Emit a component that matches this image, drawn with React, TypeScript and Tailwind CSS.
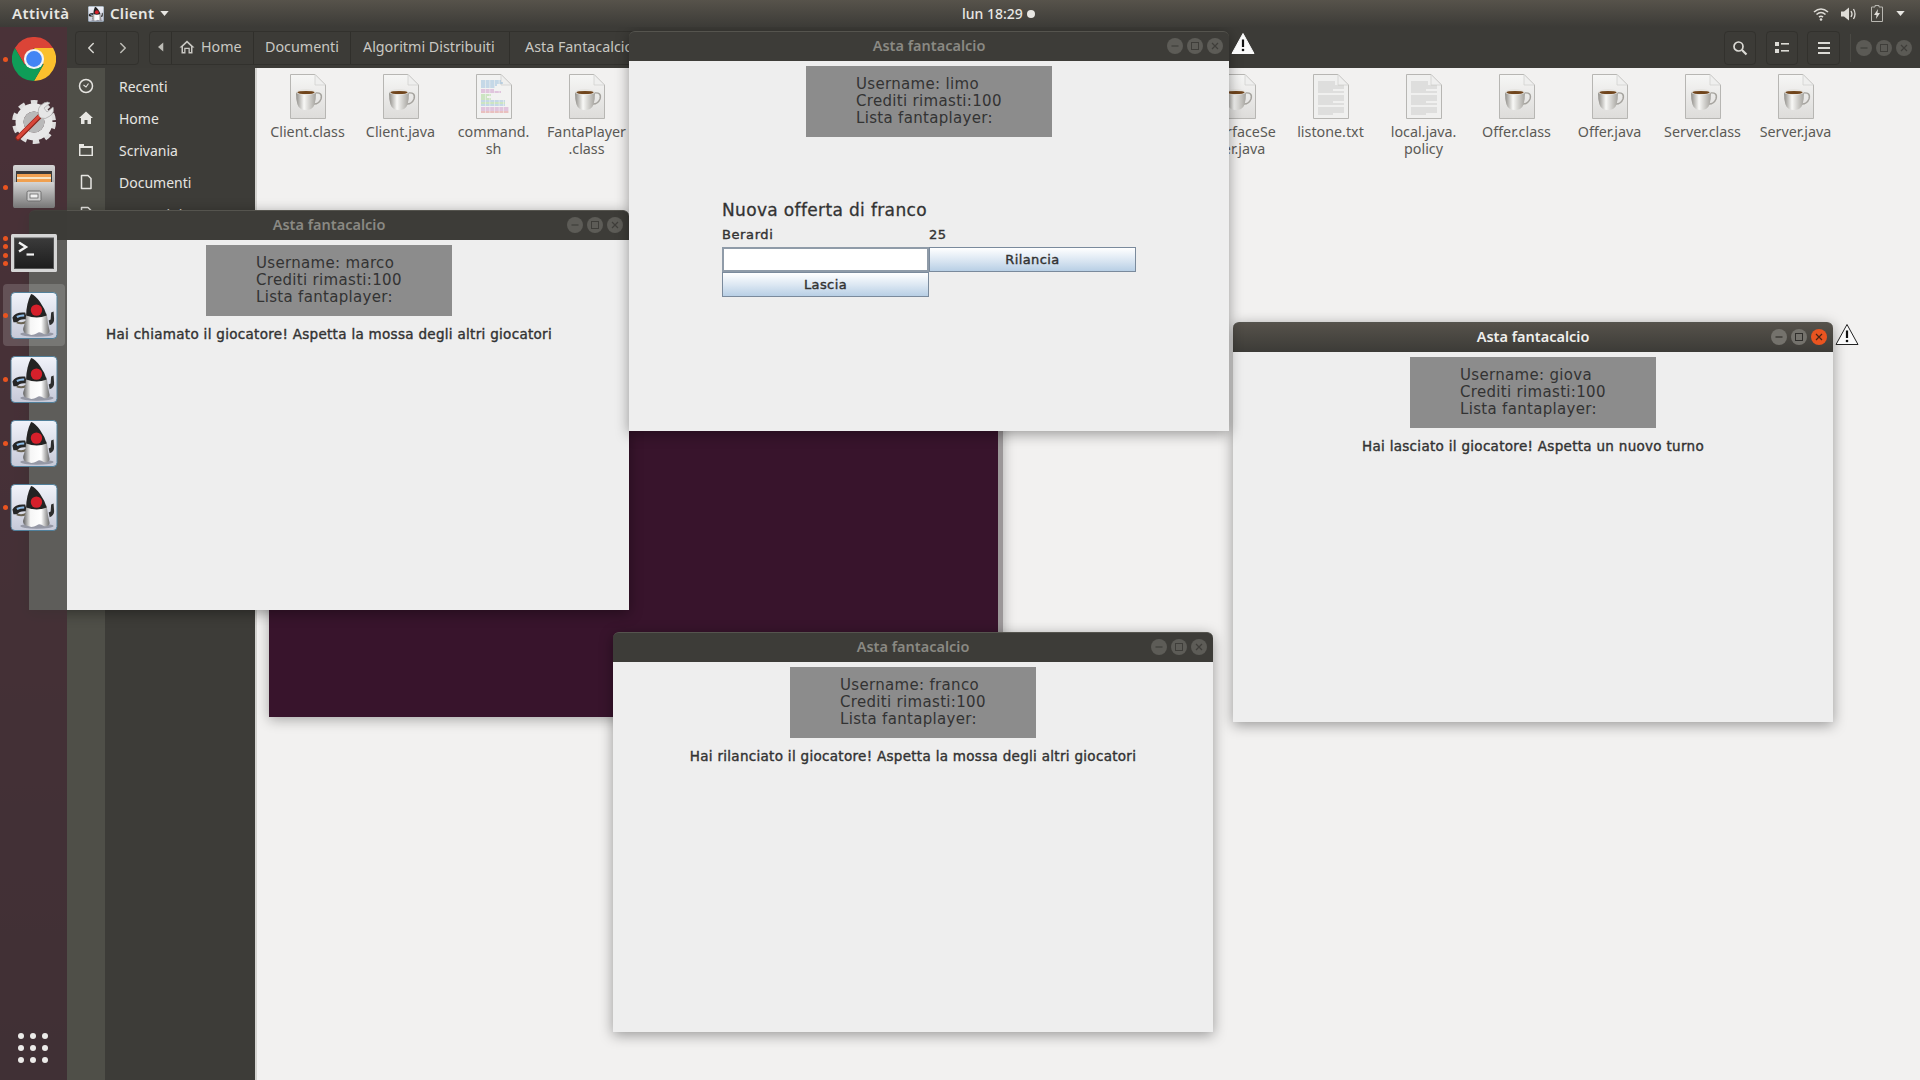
import React from "react";
import { ChevronLeft, ChevronRight } from "lucide-react";

const ui = "font-['Noto_Sans',sans-serif]";
const jf = "font-['DejaVu_Sans',sans-serif]";

function Duke({ className = "w-[48px] h-[47px]" }: { className?: string }) {
  return (
    <svg viewBox="0 0 48 48" className={className}>
      <defs>
        <linearGradient id="dbg" x1="0" y1="0" x2="0" y2="1">
          <stop offset="0" stopColor="#f1f3fa" />
          <stop offset="1" stopColor="#c6c9d8" />
        </linearGradient>
        <linearGradient id="dbody" x1="0" y1="0" x2="1" y2="0">
          <stop offset="0" stopColor="#5f5f5f" />
          <stop offset="0.28" stopColor="#f6f6f6" />
          <stop offset="0.68" stopColor="#ffffff" />
          <stop offset="1" stopColor="#6d6d6d" />
        </linearGradient>
      </defs>
      <rect x="0.5" y="0.5" width="47" height="47" rx="4" fill="url(#dbg)" stroke="#4f7f9b" />
      <ellipse cx="27" cy="43" rx="17" ry="2.6" fill="#7f818e" opacity="0.7" />
      <path d="M2 26 Q5 20 15 21 L17 28 Q9 27 7 31 L3 31Z" fill="#262626" />
      <path d="M6 24.5 Q10 22.5 14 23 L14 25 Q10 25 7 26.5Z" fill="#8fbde8" />
      <path d="M7 30 Q12 32 16 29 L16 32 Q11 34 6 32Z" fill="#6b6453" />
      <path d="M16 22 L37 22 Q38 32 40 40 Q39 44 34 43 Q30 40 27 42 Q22 45 18 43 Q12 42 13 37 Q16 30 16 22Z" fill="url(#dbody)" />
      <path d="M21 2 Q25 3 30 10 Q35 17 37 24 Q27 28 16 24 Q16 12 21 2Z" fill="#232323" />
      <circle cx="26.5" cy="18.5" r="5.8" fill="#d6202b" />
      <path d="M39 29 L41 28 L41.5 21 L44 20 L44.5 27 Q45 32 40 34Z" fill="#2e2e2e" />
    </svg>
  );
}

function Chrome() {
  return (
    <svg viewBox="0 0 48 48" className="w-[44px] h-[44px]">
      <path d="M3.2 12A24 24 0 0 1 44.8 12H24L13.6 30Z" fill="#db4437" />
      <path d="M44.8 12A24 24 0 0 1 24 48L34.4 30L24 12Z" fill="#fbc02d" />
      <path d="M24 48A24 24 0 0 1 3.2 12L13.6 30H34.4Z" fill="#0f9d58" />
      <circle cx="24" cy="24" r="11" fill="#f3f3f3" />
      <circle cx="24" cy="24" r="8.6" fill="#4285f4" />
    </svg>
  );
}

function Tools() {
  return (
    <svg viewBox="0 0 44 44" className="w-[44px] h-[44px]">
      <circle cx="22" cy="22" r="19.5" fill="none" stroke="#dedede" strokeWidth="5" strokeDasharray="6.5 6.1" />
      <circle cx="22" cy="22" r="14.5" fill="none" stroke="#e8e8e8" strokeWidth="8" />
      <circle cx="22" cy="22" r="10.5" fill="#b9b9b9" />
      <path d="M6 38 L29 15" stroke="#8a241b" strokeWidth="5.2" strokeLinecap="round" />
      <path d="M6 37.5 L29 14.5" stroke="#d8473a" strokeWidth="3.2" strokeLinecap="round" />
      <path d="M27 16 Q24 7 32 3 Q36 1 38 3 L32 8 L35 12 L41 7 Q43 12 38 16 Q33 20 29 18Z" fill="#e6e6e6" stroke="#a5a5a5" strokeWidth="0.7" />
    </svg>
  );
}

function Cabinet() {
  return (
    <svg viewBox="0 0 42 43" className="w-[42px] h-[43px]">
      <defs>
        <linearGradient id="cab" x1="0" y1="0" x2="0" y2="1">
          <stop offset="0" stopColor="#d5d5d5" />
          <stop offset="1" stopColor="#777" />
        </linearGradient>
      </defs>
      <rect x="0" y="0" width="42" height="43" rx="2" fill="url(#cab)" />
      <rect x="3" y="6" width="36" height="11" fill="#3a3a3a" />
      <rect x="4" y="9" width="34" height="8" fill="#f0a050" />
      <rect x="4" y="12" width="34" height="2" fill="#f6e3c4" />
      <rect x="1" y="17" width="40" height="26" rx="1" fill="url(#cab)" />
      <rect x="14" y="26" width="14" height="10" rx="1.5" fill="#cfcfcf" stroke="#6e6e6e" />
      <rect x="17" y="29" width="8" height="4" fill="#f2f2f2" stroke="#555" strokeWidth="0.7" />
    </svg>
  );
}

function Terminal() {
  return (
    <svg viewBox="0 0 46 38" className="w-[46px] h-[38px]">
      <defs>
        <linearGradient id="term" x1="0" y1="0" x2="0" y2="1">
          <stop offset="0" stopColor="#3b3b3b" />
          <stop offset="1" stopColor="#1d1d1d" />
        </linearGradient>
      </defs>
      <rect x="0" y="0" width="46" height="38" rx="1.5" fill="#d6d6d6" />
      <rect x="3.5" y="4" width="39" height="30.5" fill="url(#term)" stroke="#555" />
      <path d="M8 8.5 L15 13 L8 17.5" fill="none" stroke="#f4f4f4" strokeWidth="2.4" />
      <path d="M15.5 20.5 H23" stroke="#f4f4f4" strokeWidth="2.2" />
    </svg>
  );
}

function CoffeePage() {
  return (
    <svg viewBox="0 0 36 45" className="w-[36px] h-[45px]">
      <defs>
        <linearGradient id="pg" x1="0" y1="0" x2="0" y2="1">
          <stop offset="0" stopColor="#f6f6f5" />
          <stop offset="1" stopColor="#dddcda" />
        </linearGradient>
        <linearGradient id="cup" x1="0" y1="0" x2="1" y2="0">
          <stop offset="0" stopColor="#8f8d88" />
          <stop offset="0.4" stopColor="#f8f8f6" />
          <stop offset="1" stopColor="#a5a39e" />
        </linearGradient>
      </defs>
      <path d="M0.5 0.5H25L35.5 11V44.5H0.5Z" fill="url(#pg)" stroke="#b7b6b3" />
      <path d="M25 0.5V11H35.5Z" fill="#efefee" stroke="#cfcecc" strokeWidth="0.7" />
      <path d="M25 19 Q33 18 31 25 Q29 30 24 30" fill="none" stroke="#a5a39e" strokeWidth="1.5" />
      <path d="M6 18 Q6 33 11 35 Q16 37 21 35 Q26 33 26 18Z" fill="url(#cup)" />
      <ellipse cx="16" cy="18" rx="10" ry="3" fill="#e6e5e2" />
      <ellipse cx="16" cy="18.5" rx="8.6" ry="1.6" fill="#70451c" />
    </svg>
  );
}

function TextPage() {
  const rows = [8, 10, 12, 14, 16, 18, 22, 24, 26, 28, 30, 34, 36, 38, 40];
  return (
    <svg viewBox="0 0 36 45" className="w-[36px] h-[45px]">
      <path d="M0.5 0.5H25L35.5 11V44.5H0.5Z" fill="#f0f0ef" stroke="#b7b6b3" />
      <path d="M25 0.5V11H35.5Z" fill="#efefee" stroke="#cfcecc" strokeWidth="0.7" />
      {rows.map((y, i) => (
        <path key={y} d={`M5 ${y}H${y < 12 ? 22 : i % 5 === 4 ? 20 : 31}`} stroke="#b5b5b3" strokeWidth="0.6" />
      ))}
    </svg>
  );
}

function ScriptPage() {
  const rows: [number, number, string][] = [
    [7, 20, "#5d9ad0"], [9, 22, "#5d9ad0"], [11, 16, "#5d9ad0"], [13, 14, "#5d9ad0"], [16, 13, "#b65bb0"], [18, 20, "#b65bb0"],
    [21, 10, "#72c456"], [23, 6, "#72c456"], [25, 10, "#72c456"], [27, 24, "#5d9ad0"], [29, 24, "#72c456"], [31, 24, "#5d9ad0"],
    [34, 28, "#b65bb0"], [36, 28, "#b65bb0"], [38, 28, "#d34c4c"],
  ];
  return (
    <svg viewBox="0 0 36 45" className="w-[36px] h-[45px]">
      <path d="M0.5 0.5H25L35.5 11V44.5H0.5Z" fill="#f2f2f1" stroke="#b7b6b3" />
      <path d="M25 0.5V11H35.5Z" fill="#efefee" stroke="#cfcecc" strokeWidth="0.7" />
      {rows.map(([y, w, c]) => (
        <path key={y} d={`M5 ${y}H${5 + w}`} stroke={c} strokeWidth="0.6" strokeDasharray="4 0.6" />
      ))}
    </svg>
  );
}

function Warn({ outlined }: { outlined?: boolean }) {
  return (
    <svg viewBox="0 0 24 23" className="w-[24px] h-[23px]">
      <path d="M12 1.5 L23 21.5 H1Z" fill="#fafafa" stroke={outlined ? "#222" : "#fafafa"} strokeWidth="1" strokeLinejoin="round" />
      <path d="M12 7.5V15" stroke="#111" strokeWidth="2.2" />
      <circle cx="12" cy="18" r="1.3" fill="#111" />
    </svg>
  );
}

function WinBtn({ kind, active, shell }: { kind: "min" | "max" | "close"; active?: boolean; shell?: boolean }) {
  const red = kind === "close" && active;
  const glyph = red ? "#4a2414" : active ? "#2f2e2b" : "#3f3e3a";
  return (
    <span className={`w-[16px] h-[16px] rounded-full flex items-center justify-center ${red ? "bg-[#e95420]" : active ? "bg-[#74726c]" : shell ? "bg-[#5b5a55]" : "bg-[#5d5c57]"}`}>
      <svg viewBox="0 0 16 16" className="w-[16px] h-[16px]">
        {kind === "min" && <path d="M4.5 8H11.5" stroke={glyph} strokeWidth="1.2" />}
        {kind === "max" && <rect x="4.5" y="4.5" width="7" height="7" fill="none" stroke={glyph} />}
        {kind === "close" && <path d="M5 5L11 11M11 5L5 11" stroke={glyph} strokeWidth="1.2" />}
      </svg>
    </span>
  );
}

function Stats({ user }: { user: string }) {
  return (
    <div className={`w-[246px] h-[71px] bg-[#8c8c8c] flex flex-col justify-center pl-[50px] text-[#333333] text-[15px] tracking-[0.32px] leading-[17px] ${jf}`}>
      <div>Username: {user}</div>
      <div>Crediti rimasti:100</div>
      <div>Lista fantaplayer:</div>
    </div>
  );
}

function JavaWindow({ pos, active, user, children }: { pos: string; active?: boolean; user: string; children: React.ReactNode }) {
  return (
    <section className={`absolute ${pos} w-[600px] h-[400px] flex flex-col shadow-[0_3px_14px_rgba(0,0,0,0.38)] rounded-t-[6px]`}>
      <header className={`relative h-[30px] shrink-0 rounded-t-[6px] flex items-center justify-center border-t border-[#55544e] pb-[2px] ${active ? "bg-gradient-to-b from-[#56524b] to-[#3c3b37]" : "bg-[#3d3c38]"}`}>
        <span className={`text-[14.5px] font-semibold ${ui} ${active ? "text-[#f0efec]" : "text-[#8a8983]"}`}>Asta fantacalcio</span>
        <div className="absolute right-[6px] top-[6px] flex gap-[4px]">
          <WinBtn kind="min" active={active} />
          <WinBtn kind="max" active={active} />
          <WinBtn kind="close" active={active} />
        </div>
      </header>
      <div className="flex-1 bg-[#eeeeee] flex flex-col items-center pt-[5px]">
        <Stats user={user} />
        {children}
      </div>
    </section>
  );
}

function Message({ children }: { children: React.ReactNode }) {
  return <p className={`mt-[9px] h-[18px] leading-[18px] text-[13.5px] tracking-[0.3px] [-webkit-text-stroke:0.4px_#333333] text-[#333333] whitespace-nowrap ${jf}`}>{children}</p>;
}

function MetalButton({ children }: { children: React.ReactNode }) {
  return (
    <button className={`h-[25px] pt-px border border-[#7a8a9c] bg-gradient-to-b from-[#ffffff] via-[#dde8f3] to-[#b8cfe5] text-[13px] tracking-[0.4px] [-webkit-text-stroke:0.4px_#333333] text-[#333333] ${jf}`}>
      {children}
    </button>
  );
}

function DockDot({ y }: { y: string }) {
  return <span className={`absolute left-[3px] ${y} w-[5px] h-[5px] rounded-full bg-[#e95420]`} />;
}

function Dock() {
  return (
    <aside className="relative z-30 w-[67px] shrink-0 bg-[rgba(60,59,55,0.81)]">
      <DockDot y="top-[30px]" />
      <DockDot y="top-[158px]" />
      <DockDot y="top-[209px]" />
      <DockDot y="top-[217px]" />
      <DockDot y="top-[226px]" />
      <DockDot y="top-[234px]" />
      <DockDot y="top-[286px]" />
      <DockDot y="top-[350px]" />
      <DockDot y="top-[414px]" />
      <DockDot y="top-[478px]" />
      <div className="flex flex-col items-center">
        <div className="mt-[10px] h-[44px]"><Chrome /></div>
        <div className="mt-[19px] h-[44px]"><Tools /></div>
        <div className="mt-[21px] h-[43px]"><Cabinet /></div>
        <div className="mt-[26px] h-[38px]"><Terminal /></div>
        <div className="mt-[12px] w-[62px] h-[62px] rounded-[4px] bg-[rgba(255,255,255,0.16)] flex items-center justify-center"><Duke /></div>
        <div className="mt-[2px] h-[62px] flex items-center"><Duke /></div>
        <div className="mt-[2px] h-[62px] flex items-center"><Duke /></div>
        <div className="mt-[2px] h-[62px] flex items-center"><Duke /></div>
      </div>
      <div className="absolute left-[18px] bottom-[17px] grid grid-cols-3 gap-[6px]">
        {Array.from({ length: 9 }).map((_, i) => (
          <span key={i} className="w-[6px] h-[6px] rounded-full bg-[#ecebe9]" />
        ))}
      </div>
    </aside>
  );
}

function SideIcon({ kind }: { kind: string }) {
  return (
    <svg viewBox="0 0 16 16" className="w-[16px] h-[16px]" fill="none" stroke="#e6e5e1" strokeWidth="1.5">
      {kind === "clock" && (<><circle cx="8" cy="8" r="6.5" /><path d="M5.5 7L8 9L10.5 5.5" strokeWidth="1.1" /></>)}
      {kind === "home" && <path d="M8 1.5L15 8H13V14H9.5V10H6.5V14H3V8H1Z" fill="#e6e5e1" stroke="none" />}
      {kind === "folder" && <path d="M1 2H6V4H15V14H1Z M2.5 6V12.8H13.5V6Z" fill="#e6e5e1" fillRule="evenodd" stroke="none" />}
      {kind === "doc" && <path d="M3.5 1.5H10L13 4.5V14.5H3.5Z" strokeLinejoin="round" />}
    </svg>
  );
}

function PathCell({ w, children }: { w: string; children: React.ReactNode }) {
  return <div className={`${w} h-full flex items-center shrink-0 border-r border-[#302f2b] text-[14.3px] text-[#c9c8c3] whitespace-nowrap pb-px`}>{children}</div>;
}

const files: ([string, string, string?] | null)[] = [
  ["coffee", "Client.class"],
  ["coffee", "Client.java"],
  ["script", "command.", "sh"],
  ["coffee", "FantaPlayer", ".class"],
  null, null, null, null, null, null,
  ["coffee", "InterfaceSe", "rver.java"],
  ["text", "listone.txt"],
  ["text", "local.java.", "policy"],
  ["coffee", "Offer.class"],
  ["coffee", "Offer.java"],
  ["coffee", "Server.class"],
  ["coffee", "Server.java"],
];

function FileItem({ f }: { f: [string, string, string?] | null }) {
  if (!f) return <div className="w-[93px]" />;
  const [k, a, b] = f;
  return (
    <div className={`w-[93px] flex flex-col items-center text-[14.3px] leading-[17px] text-[#5b5a56] text-center ${ui}`}>
      {k === "coffee" ? <CoffeePage /> : k === "text" ? <TextPage /> : <ScriptPage />}
      <div className="mt-[4px] whitespace-nowrap">{a}</div>
      {b && <div className="whitespace-nowrap">{b}</div>}
    </div>
  );
}

function Files() {
  return (
    <main className={`relative flex-1 flex flex-col min-w-0 ${ui}`}>
      <div className="h-[41px] shrink-0 bg-[#3c3b37] flex items-center pl-[8px] pr-[8px]">
        <div className="w-[64px] h-[34px] flex rounded-[4px] border border-[#32312d] text-[#d8d7d2]">
          <span className="w-[32px] flex items-center justify-center border-r border-[#32312d]"><ChevronLeft size={18} /></span>
          <span className="w-[32px] flex items-center justify-center text-[#bdbcb6]"><ChevronRight size={18} /></span>
        </div>
        <div className="ml-[10px] h-[34px] flex rounded-l-[4px] border border-[#32312d]">
          <PathCell w="w-[22px] justify-center">
            <svg viewBox="0 0 8 12" className="w-[6px] h-[10px]"><path d="M7 0V12L0 6Z" fill="#bdbcb6" /></svg>
          </PathCell>
          <PathCell w="w-[82px] pl-[7px] gap-[6px]">
            <svg viewBox="0 0 16 16" className="w-[16px] h-[16px]"><path d="M8 1.5L15.5 8.5H13.5V14.5H9.5V10H6.5V14.5H2.5V8.5H.5Z M4 7.5V13H5.2V8.7H10.8V13H12V7.5L8 3.7Z" fill="#c9c8c3" fillRule="evenodd" /></svg>
            Home
          </PathCell>
          <PathCell w="w-[97px] pl-[11px]">Documenti</PathCell>
          <PathCell w="w-[159px] pl-[12px]">Algoritmi Distribuiti</PathCell>
          <PathCell w="w-[150px] pl-[15px]">Asta Fantacalcio</PathCell>
        </div>
        <div className="ml-auto flex items-center">
          <span className="w-[32px] h-[34px] rounded-[4px] border border-[#32312d] flex items-center justify-center">
            <svg viewBox="0 0 16 16" className="w-[16px] h-[16px]"><circle cx="6.5" cy="6.5" r="4.5" fill="none" stroke="#dcdbd6" strokeWidth="1.7" /><path d="M10 10L14.5 14.5" stroke="#dcdbd6" strokeWidth="2.2" /></svg>
          </span>
          <span className="ml-[10px] w-[32px] h-[34px] rounded-[4px] border border-[#32312d] flex items-center justify-center">
            <svg viewBox="0 0 14 12" className="w-[14px] h-[12px]" fill="#dcdbd6"><rect x="0" y="0" width="4" height="4" /><rect x="0" y="7" width="4" height="4" /><rect x="6" y="1" width="8" height="1.6" /><rect x="6" y="8" width="8" height="1.6" /></svg>
          </span>
          <span className="ml-[9px] w-[33px] h-[34px] rounded-[4px] border border-[#32312d] flex items-center justify-center">
            <svg viewBox="0 0 12 12" className="w-[12px] h-[12px]" fill="#dcdbd6"><rect y="0" width="12" height="2" /><rect y="5" width="12" height="2" /><rect y="10" width="12" height="2" /></svg>
          </span>
          <span className="ml-[10px] w-px h-[28px] bg-[#4a4944]" />
          <div className="ml-[5px] flex gap-[4px]">
            <WinBtn kind="min" shell />
            <WinBtn kind="max" shell />
            <WinBtn kind="close" shell />
          </div>
        </div>
      </div>
      <div className="flex-1 flex min-h-0">
        <nav className="w-[188px] shrink-0 flex bg-[#3d3c38] overflow-hidden">
          <div className="w-[38px] shrink-0 bg-[#4f4f48] pt-[2px] flex flex-col items-center">
            {["clock", "home", "folder", "doc", "doc"].map((k, i) => (
              <div key={i} className="h-[32px] flex items-center"><SideIcon kind={k} /></div>
            ))}
          </div>
          <div className="pl-[14px] pt-[2px] text-[14px] text-[#e6e5e1]">
            {["Recenti", "Home", "Scrivania", "Documenti", "Immagini"].map((t) => (
              <div key={t} className="h-[32px] flex items-center">{t}</div>
            ))}
          </div>
        </nav>
        <div className="flex-1 bg-[#f2f1f0] border-l-2 border-[#d4d3d0] pl-[4px] pt-[6px] flex items-start">
          {files.map((f, i) => <FileItem key={i} f={f} />)}
        </div>
      </div>
    </main>
  );
}

export default function App() {
  return (
    <div className="relative w-[1920px] h-[1080px] overflow-hidden flex flex-col bg-gradient-to-b from-[#860c3c] to-[#51002d]">
      <div className={`relative z-40 h-[27px] shrink-0 flex items-center bg-gradient-to-b from-[#57534b] to-[#3c3b37] text-[14px] font-medium text-[#e8e7e3] ${ui}`}>
        <div className="w-[962px] shrink-0 flex items-center pl-[12px]">
          <span className="w-[76px] text-[15px] font-semibold tracking-[0.45px]">Attività</span>
          <span className="w-[16px] h-[16px]"><Duke className="w-[16px] h-[16px]" /></span>
          <span className="ml-[6px] text-[15px] font-semibold tracking-[0.3px]">Client</span>
          <svg viewBox="0 0 10 6" className="ml-[6px] w-[9px] h-[5px]"><path d="M0 0H10L5 6Z" fill="#e8e7e3" /></svg>
        </div>
        <span>lun 18:29</span>
        <span className="ml-[4px] w-[8px] h-[8px] rounded-full bg-[#e8e7e3]" />
        <div className="ml-auto pr-[15px] flex items-center gap-[12px]">
          <svg viewBox="0 0 16 14" className="w-[16px] h-[14px]" fill="none" stroke="#dedcd7" strokeWidth="1.6">
            <path d="M1 5Q8 -1 15 5" /><path d="M3.5 7.5Q8 3.5 12.5 7.5" /><path d="M6 10Q8 8.5 10 10" />
            <circle cx="8" cy="12.5" r="1.3" fill="#dedcd7" stroke="none" />
          </svg>
          <svg viewBox="0 0 16 14" className="w-[16px] h-[14px]" fill="none" stroke="#dedcd7" strokeWidth="1.3">
            <path d="M0 4.5H3L8 .5V13.5L3 9.5H0Z" fill="#dedcd7" stroke="none" /><path d="M10 4Q12 7 10 10" /><path d="M12.5 2Q15.5 7 12.5 12" />
          </svg>
          <svg viewBox="0 0 12 17" className="ml-[2px] w-[12px] h-[17px]">
            <path d="M4 .5H8V2H11.5V16.5H.5V2H4Z" fill="none" stroke="#b8b7b1" />
            <path d="M7 4L3 10H5.5L5 14L9 8H6.5Z" fill="#dedcd7" />
          </svg>
          <svg viewBox="0 0 10 6" className="ml-[1px] w-[9px] h-[5px]"><path d="M0 0H10L5 6Z" fill="#e8e7e3" /></svg>
        </div>
      </div>

      <div className="flex-1 flex min-h-0">
        <Dock />
        <Files />
      </div>

      <div className="absolute z-[5] left-[269px] top-[300px] w-[734px] h-[417px] bg-[#38142c] border-r-[5px] border-[#9b9798] shadow-[0_3px_12px_rgba(0,0,0,0.3)]" />

      <JavaWindow pos="z-10 left-[613px] top-[632px]" user="franco">
        <Message>Hai rilanciato il giocatore! Aspetta la mossa degli altri giocatori</Message>
      </JavaWindow>

      <JavaWindow pos="z-10 left-[1233px] top-[322px]" active user="giova">
        <Message>Hai lasciato il giocatore! Aspetta un nuovo turno</Message>
      </JavaWindow>
      <div className="absolute z-20 left-[1835px] top-[323px]"><Warn outlined /></div>

      <JavaWindow pos="z-20 left-[29px] top-[210px]" user="marco">
        <Message>Hai chiamato il giocatore! Aspetta la mossa degli altri giocatori</Message>
      </JavaWindow>

      <JavaWindow pos="z-20 left-[629px] top-[31px]" user="limo">
        <div className={`self-start ml-[93px] mt-[62px] w-[414px] text-[#333333] ${jf}`}>
          <h2 className="h-[20px] leading-[20px] pt-px text-[17px] tracking-[0.35px] [-webkit-text-stroke:0.3px_#333333] whitespace-nowrap">Nuova offerta di franco</h2>
          <div className="h-[28px] grid grid-cols-2 items-center pt-[3px] text-[13px] tracking-[0.6px] [-webkit-text-stroke:0.4px_#333333]">
            <span>Berardi</span>
            <span>25</span>
          </div>
          <div className="grid grid-cols-2">
            <input className="h-[25px] bg-white border-2 border-[#8f9ba8] outline-none" />
            <MetalButton>Rilancia</MetalButton>
            <MetalButton>Lascia</MetalButton>
          </div>
        </div>
      </JavaWindow>
      <div className="absolute z-30 left-[1231px] top-[32px]"><Warn /></div>
    </div>
  );
}
